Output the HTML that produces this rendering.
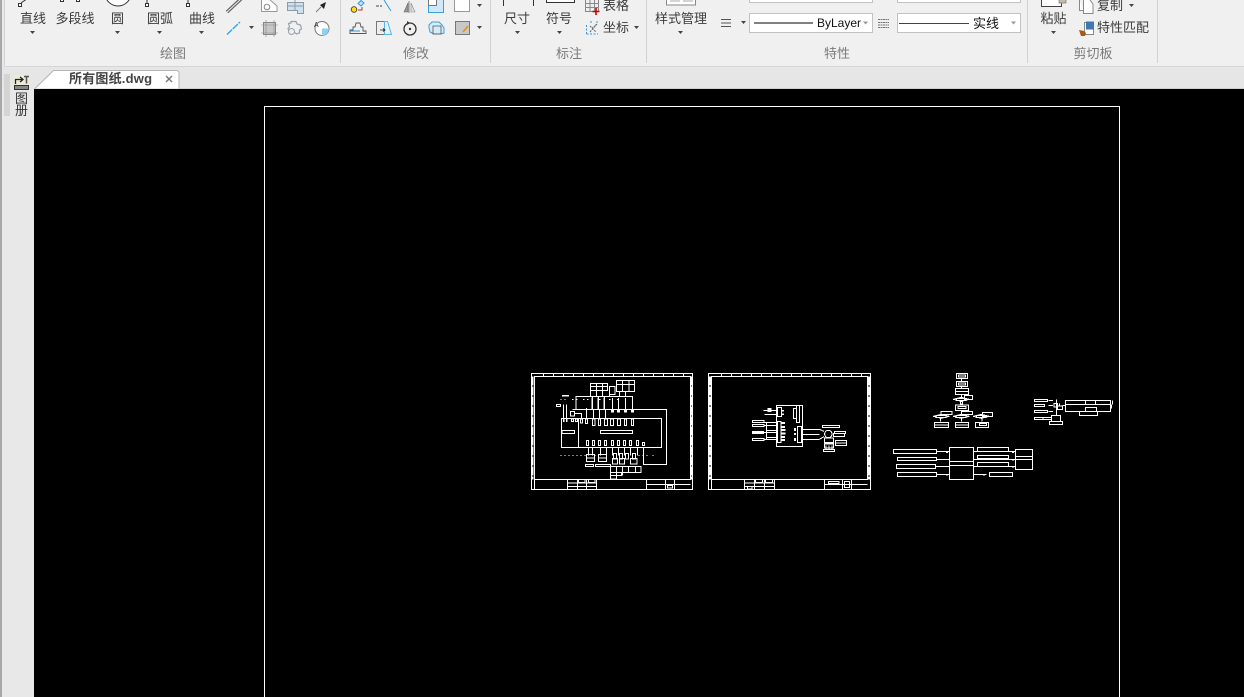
<!DOCTYPE html>
<html><head><meta charset="utf-8"><style>
html,body{margin:0;padding:0;width:1244px;height:697px;overflow:hidden;background:#e8e8e8}
svg{display:block;position:absolute;left:0;top:0;overflow:hidden}
text{font-family:"Liberation Sans","Noto Sans CJK SC",sans-serif;font-size:13px;fill:#3c3c3c}
.g{fill:#7a7a7a;text-anchor:middle}
.m{text-anchor:middle}
.d path,.d rect,.d line{fill:none;stroke:#fff;stroke-width:3}
.d .f{fill:#fff;stroke:none}
.d .b{stroke-width:7;stroke-dasharray:27 3}
</style></head><body>
<svg width="1244" height="697" viewBox="0 0 1244 697">
<!-- backgrounds -->
<rect width="1244" height="697" fill="#e8e8e8"/>
<rect x="4" y="0" width="1240" height="66" fill="#f0f0f0"/>
<rect x="4" y="66" width="1240" height="1" fill="#d6d6d6"/>
<rect x="0" y="0" width="2" height="697" fill="#a8a8a8"/>
<rect x="4" y="0" width="1" height="66" fill="#d4d4d4"/>
<rect x="2" y="67" width="1242" height="21" fill="#e6e6e6"/>
<rect x="34" y="88" width="1210" height="1" fill="#cfcfcf"/>
<rect x="34" y="89" width="1210" height="608" fill="#000"/>
<g fill="#d2d2d2"><rect x="340" y="0" width="1" height="63"/><rect x="490" y="0" width="1" height="63"/><rect x="646" y="0" width="1" height="63"/><rect x="1027" y="0" width="1" height="63"/><rect x="1157" y="0" width="1" height="63"/></g>

<!-- left panel -->
<rect x="4" y="74" width="6" height="42" fill="#d4d4d4"/>
<rect x="14" y="75" width="16" height="15" fill="#ebebd8"/>
<path d="M15.500 84V79.500H22M20 77l3 2.500-3 2.500" fill="none" stroke="#222" stroke-width="1.300"/>
<path d="M24 76.500h5M26.500 76.500v7" fill="none" stroke="#555" stroke-width="1.500"/>
<rect x="14.500" y="85.500" width="14" height="4" fill="#888" stroke="#333"/>
<text x="15" y="103" style="font-size:13px;fill:#333">图</text>
<text x="15" y="115" style="font-size:13px;fill:#333">册</text>

<!-- tab -->
<path d="M35 88.500L53.500 70.500H176q3 0 3 3V88.500" fill="#fff" stroke="#b4b4b4"/>
<text x="69" y="83" style="font-weight:bold;fill:#444;letter-spacing:.2px">所有图纸.dwg</text>
<path d="M166 76l6 6M172 76l-6 6" stroke="#777" stroke-width="1.400" fill="none"/>

<!-- ribbon text -->
<g class="t">
<text class="m" x="33" y="23">直线</text>
<text class="m" x="75" y="23">多段线</text>
<text class="m" x="117.500" y="23">圆</text>
<text class="m" x="160" y="23">圆弧</text>
<text class="m" x="202" y="23">曲线</text>
<text class="g" x="173" y="58">绘图</text>
<text class="g" x="416" y="58">修改</text>
<text class="g" x="569" y="58">标注</text>
<text class="g" x="837" y="58">特性</text>
<text class="g" x="1093" y="58">剪切板</text>
<text class="m" x="517" y="23">尺寸</text>
<text class="m" x="559" y="23">符号</text>
<text x="603" y="10">表格</text>
<text x="603" y="32">坐标</text>
<text class="m" x="681" y="23">样式管理</text>
<text class="m" x="1053.500" y="23">粘贴</text>
<text x="1097" y="10">复制</text>
<text x="1097" y="32">特性匹配</text>
</g>

<!-- small arrows -->
<g fill="#444">
<path d="M30 31h5l-2.500 3z"/><path d="M115 31h5l-2.500 3z"/><path d="M157 31h5l-2.500 3z"/><path d="M199 31h5l-2.500 3z"/>
<path d="M249 26h5l-2.500 3z"/><path d="M477 4h5l-2.500 3z"/><path d="M477 26h5l-2.500 3z"/>
<path d="M515 31h5l-2.500 3z"/><path d="M557 31h5l-2.500 3z"/><path d="M634 26h5l-2.500 3z"/><path d="M678 31h5l-2.500 3z"/>
<path d="M741 21h5l-2.500 3z"/><path d="M1051 31h5l-2.500 3z"/><path d="M1129 4h5l-2.500 3z"/>
</g>

<!-- draw icons -->
<g fill="none" stroke="#333" stroke-width="1">
<rect x="18.500" y="3.500" width="3" height="3" fill="#fff"/><path d="M21 3l5-3.500"/>
<rect x="60.500" y="-1.500" width="3" height="3" fill="#fff"/><rect x="76.500" y="-1.500" width="3" height="3" fill="#fff"/>
<circle cx="118" cy="-7" r="13" fill="#fff"/>
<rect x="145.500" y="3.500" width="3" height="3" fill="#fff"/><path d="M147 3v-4"/>
<rect x="186.500" y="3.500" width="3" height="3" fill="#fff"/><path d="M188 3v-4"/>
</g>
<path d="M227 12L241 -1" stroke="#666" stroke-width="3.500" fill="none"/><path d="M227 12L241 -1" stroke="#eee" stroke-width="1" fill="none"/>
<path d="M261.500 -1V11.500H277V6L269 -1" fill="#fff" stroke="#999"/><circle cx="267" cy="7" r="2.800" fill="none" stroke="#888"/>
<path d="M287.500 2.500H303.500V13.500H297.500V10.500H287.500Z" fill="#cfe0ef" stroke="#8a9aa8"/><path d="M295 0v10M288 6h15" stroke="#8a9aa8" fill="none"/>
<path d="M316 12l5-5" stroke="#777" fill="none"/><path d="M320 5l6-3-2 7z" fill="#222"/>
<path d="M227 34.500L240 22" stroke="#2aa8e8" stroke-width="1.400" stroke-dasharray="7 1" fill="none"/>
<rect x="263.500" y="22.500" width="12" height="12" fill="#c8c8c8" stroke="#888"/><path d="M261 25h17M261 33h17M266 20v17M274 20v17" stroke="#888" stroke-width=".6"/>
<path d="M291 21.500h5l1 2.500 3.500 1 1 4-2 1v3l-3 1-2-1.500h-5l-1.500-4 1.500-1.500-1-3.500 2.500-.5z" fill="#eef0f2" stroke="#98a2aa" stroke-width="1.200"/><circle cx="291.500" cy="31.500" r="3" fill="#f0f0f0" stroke="#98a2aa"/>
<circle cx="322" cy="28.500" r="7" fill="#fff" stroke="#777"/><path d="M322 28.500h7a7 7 0 0 1-7 7z" fill="#8fd0f2"/>
<text x="314" y="27" style="font-size:7px;fill:#333">A</text>

<!-- modify icons -->
<path d="M358 3.500L361 0.500 364 3 361 6z" fill="#bfe2f7" stroke="#2f9ad8"/>
<circle cx="354" cy="9.500" r="2.800" fill="#ffdf10" stroke="#333" stroke-width=".8"/><path d="M358 10h4V7" stroke="#b33" fill="none"/>
<path d="M376 6h6" stroke="#444" stroke-dasharray="3 1" fill="none"/><path d="M384 0l7 11" stroke="#2f9ad8" fill="none"/>
<path d="M409 1v12" stroke="#888" fill="none"/><path d="M408 3l-4 9h4z" fill="#999" stroke="#666" stroke-width=".6"/><path d="M411 3l4 9h-4z" fill="#d6e2ea" stroke="#888" stroke-width=".6"/>
<rect x="428.500" y="-1.500" width="15" height="14" fill="#cfe8fa" stroke="#3aa0dc"/><rect x="428.500" y="-1.500" width="8" height="7" fill="#fff" stroke="#777"/>
<rect x="454.500" y="-1.500" width="15" height="13" fill="#fff" stroke="#999"/>
<path d="M350 33.500h16v-2.500h-3v-4h-2l-1-4h-4l-1 4h-2v3h-3z" fill="none" stroke="#555" stroke-width=".9"/><path d="M350 31h10" stroke="#2f9ad8"/>
<rect x="376.500" y="21.500" width="8" height="13" fill="#eee" stroke="#777"/><path d="M384.500 21.500h3l4 13h-7z" fill="#e4f3fb" stroke="#5ab4e4"/><path d="M380 30h5m-2-1.500l2 1.500-2 1.500" stroke="#222" fill="none" stroke-width=".8"/>
<circle cx="410" cy="29" r="6" fill="none" stroke="#333" stroke-width="1.300"/><circle cx="410" cy="29" r="1.200" fill="#333"/><path d="M407 21l3 2-3 2z" fill="#333"/>
<path d="M429 25l3-3h7l3 3 2 3v5l-3 1h-7l-4-2-1-4z" fill="#d2ecfa" stroke="#3aa0dc"/><path d="M433 26h8v8h-8z" fill="none" stroke="#555" stroke-width=".8"/>
<rect x="455.500" y="21.500" width="14" height="13" fill="#c8c8c8" stroke="#777"/><path d="M463 32l5-6" stroke="#e88e10" stroke-width="1.500" fill="none"/>

<!-- annotation icons -->
<path d="M503.500 0v6M533.500 0v6" stroke="#333" fill="none"/>
<rect x="546.500" y="-3" width="28" height="5.500" fill="#fff" stroke="#333"/>
<path d="M585.500 0v11.500h13V0M585 3.500h14M585 7.500h14M590 0v11M594.500 0v11" stroke="#888" fill="#eee"/>
<path d="M596 8v7M592.500 11.500h7" stroke="#c80000" stroke-width="1.600" fill="none"/>
<path d="M586.500 34V24M586.500 34H598M590 22h2M596 22h2M592 28l5-4" stroke="#3a9ad8" stroke-dasharray="2 1.500" fill="none"/>
<path d="M590 32l7-8M590 26l6 6" stroke="#666" stroke-dasharray="2 1" fill="none"/>
<rect x="666.500" y="-3" width="29" height="8" fill="#fff" stroke="#888"/><path d="M670 1h10M683 1h10" stroke="#aaa" fill="none"/>

<!-- properties -->
<path d="M721 19.500h10M721 23h10M721 26.500h10" stroke="#555" fill="none"/>
<g fill="#fff" stroke="#c2c2c2"><rect x="749.500" y="-5" width="123" height="7.500"/><rect x="897.500" y="-5" width="123" height="7.500"/><rect x="749.500" y="13.500" width="123" height="19"/><rect x="897.500" y="13.500" width="123" height="19"/></g>
<path d="M754 23h59" stroke="#000" fill="none"/>
<path d="M899 23.500h70" stroke="#e00000" fill="none"/>
<text x="817" y="27" style="font-size:12px;fill:#111">ByLayer</text>
<text x="973" y="28" style="fill:#111">实线</text>
<path d="M863 21.500h5l-2.500 3zM1011 21.500h5l-2.500 3z" fill="#999"/>
<path d="M878 19.500h11M878 22.500h11M878 25h11M878 27.500h11" stroke="#777" fill="none" stroke-dasharray="2 .5"/>

<!-- clipboard -->
<rect x="1041.500" y="-3" width="20" height="9.500" fill="#fff" stroke="#444"/><rect x="1059" y="-2" width="7" height="5" fill="#c4bcae" stroke="#666" stroke-width=".6"/>
<path d="M1079.500 0v10.500h4M1083.500 0v13.500h9.500V4l-3-4" fill="#fff" stroke="#888"/>
<rect x="1084.500" y="22.500" width="9" height="12" fill="#fff" stroke="#888"/><rect x="1086" y="21.500" width="8" height="8" fill="#3e78b4"/>
<path d="M1079 30l5 1 2 2-1 3h-4z" fill="#a85a18"/>

<!-- canvas -->
<g class="d" shape-rendering="crispEdges">
<path d="M264.500 697V106.500H1119.500V697" style="stroke-width:1"/>
<g transform="translate(525 368) scale(.3333)">
<rect x="19.500" y="16.500" width="483" height="348"/><rect x="28.500" y="25.500" width="468" height="309"/>
<path class="b" d="M22 26V335M500 26V335"/>
<path d="M55 16v9M85 16v9M115 16v9M145 16v9M175 16v9M205 16v9M235 16v9M265 16v9M295 16v9M325 16v9M355 16v9M385 16v9M415 16v9M445 16v9M475 16v9M28 335V364"/>
<path d="M127 335V364M157 335V364M184 335V364M214 335V364M127 345H214M127 355H214M160 335v8h20v-8M190 335v8h20v-8M364 335V364M421 335V364M448 335V364M364 349H497M427 352h16v8h-16z"/>
<path d="M109 151h301v87H109zM142 124h283v166H355V238M153 85h170v39H153zM160 151v87M111 187h38v9h-38zM226 187h97v9H226z"/>
<path d="M196 46h52v10H196zM196 56h52v12H196zM214 46v22M232 46v22M253 55h17v24H253zM274 37h55v12H274zM274 49h55v22H274zM292 37v34M312 37v34M196 68v16M214 68v16M232 68v16M253 79v6M283 71v14M302 71v14"/>
<path d="M202 87v37M220 87v37M238 87v37M262 90v40M280 90v40M301 90v40M322 90v40M185 120v30M205 124v30M223 124v30M241 124v30M202 153h8v20h-8zM220 153h7v20h-7zM238 153h10v20h-10zM257 153h9v20h-9zM277 153h10v20h-10zM298 153h7v20h-7zM319 153h7v20h-7zM181 153h7v14h-7zM166 153h7v12h-7z"/>
<path d="M115 110v50M124 110v50M94 109h13v7H94zM136 130h12v14H136zM150 136h20v15M139 153h7v8h-7zM151 153h6v8h-6z"/>
<rect class="f" x="111" y="81" width="21" height="5"/><rect class="f" x="114" y="152" width="5" height="10"/><rect class="f" x="123" y="152" width="5" height="10"/><rect class="f" x="258" y="124" width="9" height="10"/><rect class="f" x="276" y="124" width="9" height="10"/><rect class="f" x="297" y="124" width="9" height="10"/><rect class="f" x="318" y="124" width="9" height="10"/><rect class="f" x="199" y="88" width="5" height="36"/><rect class="f" x="217" y="88" width="5" height="36"/><rect class="f" x="235" y="88" width="5" height="36"/>
<path d="M184 217h7v16h-7zM202 217h7v16h-7zM220 217h7v16h-7zM238 217h7v16h-7zM259 217h7v16h-7zM277 217h7v16h-7zM295 217h7v16h-7zM313 217h7v16h-7zM334 217h7v16h-7zM352 223h7v10h-7z"/>
<path d="M190 238v25M202 238v25M226 238v25M244 238v25M262 238v25M280 238v25M298 238v25M316 238v25M338 238v25"/>
<path d="M184 259h25v21h-25zM220 259h25v21h-25zM265 257h10v16h-10zM283 257h10v16h-10zM301 257h10v16h-10zM322 257h10v16h-10zM262 272h16v16h-16zM283 272h16v16h-16zM316 272h20v16h-20zM184 270h25M220 270h25M181 289h24v7h-24zM211 289h45v7H211z"/>
<path d="M256 295h92v19H256zM256 314h34v9h-34zM256 323h18v10h-18zM274 295v38M292 295v28M310 295v19M331 295v19"/>
<path d="M106 94h4M118 94h4M141 94h4M153 94h4M174 94h4M186 94h4M222 94h4M252 94h4M276 94h4M106 262h3M118 262h3M130 262h3M142 262h3M154 262h3M166 262h3M178 262h3M208 262h3M340 262h3M352 262h3M364 262h3M382 262h3"/>
</g>
<g transform="translate(704 368) scale(.3333)">
<rect x="13.500" y="16.500" width="486" height="348"/><rect x="22.500" y="25.500" width="468" height="309"/>
<path class="b" d="M17 26V335M495 26V335"/>
<path d="M52 16v9M82 16v9M112 16v9M142 16v9M172 16v9M202 16v9M232 16v9M262 16v9M292 16v9M322 16v9M352 16v9M382 16v9M412 16v9M442 16v9M472 16v9M22 335V364"/>
<path d="M121 335V364M151 335V364M181 335V364M211 335V364M121 345H211M121 355H211M154 335v8h22v-8M184 335v8h22v-8M130 355h14v8h-14zM361 335V364M415 335V364M442 335V364M361 349H490M373 340h32v7h-32zM421 340h16v19h-16zM421 349h16"/>
<path d="M217 112h79v124H217zM220 118h13v28h-13zM268 121h9v31h-9zM277 113h10v51h-10zM220 160h11v64h-11zM280 175h13v48h-13z"/>
<path d="M178 127h40M181 139h37M145 157h35v6h-35zM145 169h35v6h-35zM145 211h35v6h-35zM180 163h37M180 172h37M180 193h37M180 214h37M187 163v51M187 187h30M187 208h30M296 184h50M296 199h50M296 214h50M346 184l14 6M346 214l14-8"/>
<rect class="f" x="144" y="189" width="36" height="9"/><rect class="f" x="190" y="120" width="12" height="12"/><rect class="f" x="233" y="162" width="10" height="6"/><rect class="f" x="233" y="174" width="10" height="6"/><rect class="f" x="233" y="183" width="12" height="6"/><rect class="f" x="233" y="194" width="12" height="6"/><rect class="f" x="233" y="204" width="10" height="6"/><rect class="f" x="233" y="213" width="10" height="6"/><rect class="f" x="270" y="180" width="6" height="9"/><rect class="f" x="270" y="195" width="6" height="6"/><rect class="f" x="270" y="210" width="6" height="9"/><rect class="f" x="233" y="126" width="7" height="5"/><rect class="f" x="233" y="136" width="7" height="5"/>
<path d="M355 172h52v6h-52zM373 187a11 11 0 1 0 .1 0zM391 190h34v7h-34zM388 197h34v9h-34zM394 218h34v14h-34zM394 225h34M361 210h27v30h-27zM358 244h34v6h-34zM366 232v12M375 232v12M384 232v12"/>
<rect class="f" x="362" y="222" width="26" height="7"/>
</g>
<g transform="translate(885 368) scale(.3333)">
<path d="M214 16h34v16h-34zM220 21h22v6h-22zM214 40h34v16h-34zM220 45h22v6h-22zM229 32v8M229 56v6M211 62h40v18h-40zM211 70h40M229 80v8M238 82h25v13h-25zM205 94l24-6 24 6-24 6zM215 91h28v6H215zM226 100h6v8h-6zM211 111h40v16h-40zM219 115h24v6h-24zM229 127v6"/>
<path d="M168 130h33v9h-33zM229 130h34v10h-34zM292 133h31v12h-31zM145 145l24-6 24 6-24 6zM205 145l24-6 24 6-24 6zM265 145l24-6 24 6-24 6zM153 142h30v6h-30zM213 142h30v6h-30zM275 142h28v6h-28zM167 151v10M229 151v10M291 151v10M148 163h42v16h-42zM148 171h42M211 163h40v16h-40zM211 171h40M271 163h40v16h-40zM283 166h22v7h-22z"/>
<path d="M448 94h40v7h-40zM448 110h31v6h-31zM448 127h40v7h-40zM448 148h52v6h-52zM474 148v6M490 97h14M490 113h14M490 130h14M515 94v47M507 106h11v11h-11zM517 114h16v11h-16zM524 106v8M500 142h27v18h-27zM493 160h40v10h-40zM541 97h136v34H541zM541 109h136M601 97h31v12h-31zM601 118h34v13h-34zM583 131h55v12h-55zM682 97v12M533 112h8"/>
<rect class="f" x="676" y="109" width="5" height="13"/>
<path d="M25 244h130v13H25zM37 268h118v9H37zM34 289h118v12H34zM37 313h118v12H37zM155 250h38M155 274h38M152 295h41M155 319h38M193 238h73v97h-73zM193 280h73v13h-73zM266 250h124M266 274h124M266 295h124M266 319h39M277 238h94v13h-94zM277 262h94v9h-94zM277 283h94v12h-94zM313 313h70v13h-70zM391 244h52v61h-52zM391 265h52M391 274h52"/>
<rect class="f" x="183" y="252" width="6" height="3"/><rect class="f" x="183" y="294" width="6" height="3"/><rect class="f" x="183" y="319" width="6" height="3"/><rect class="f" x="381" y="252" width="6" height="3"/><rect class="f" x="381" y="275" width="6" height="3"/><rect class="f" x="381" y="296" width="6" height="3"/><rect class="f" x="294" y="320" width="6" height="3"/>
</g>
</g>
</svg>
</body></html>
